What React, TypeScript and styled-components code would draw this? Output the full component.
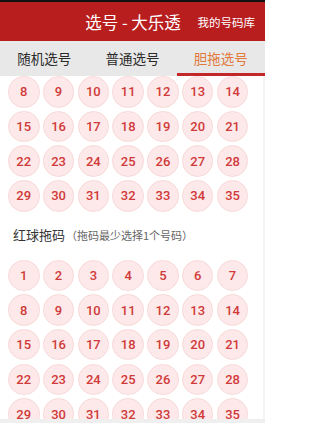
import React from "react";
import styled, { createGlobalStyle } from "styled-components";

const Global = createGlobalStyle`
  html, body { margin: 0; padding: 0; background: #fff; }
  body { width: 265px; height: 423px; overflow: hidden; font-family: Roboto, "Noto Sans CJK SC", sans-serif; }
  * { box-sizing: border-box; }
`;

const Screen = styled.div`
  width: 265px;
  height: 423px;
  display: flex;
  flex-direction: column;
  overflow: hidden;
  background: #fff;
`;

const StatusBar = styled.div`
  height: 2px;
  background: #111;
  flex: none;
`;

const Header = styled.div`
  height: 39px;
  flex: none;
  background: #b91e1f;
  position: relative;
  display: flex;
  align-items: center;
  justify-content: center;
  color: #fff;
`;

const Title = styled.div`
  font-family: "Noto Sans CJK SC", sans-serif;
  font-size: 16.5px;
  line-height: 1;
  margin-top: 2px;
  margin-left: 1px;
`;

const HeaderAction = styled.div`
  position: absolute;
  right: 10px;
  top: 0;
  bottom: 0;
  display: flex;
  align-items: center;
  font-family: "Noto Sans CJK SC", sans-serif;
  font-size: 11.5px;
  padding-top: 1px;
`;

const Tabs = styled.div`
  height: 35px;
  flex: none;
  background: #e8e8e8;
  display: grid;
  grid-template-columns: repeat(3, 1fr);
`;

const Tab = styled.div<{ $active?: boolean }>`
  display: flex;
  align-items: center;
  justify-content: center;
  font-family: "Noto Sans CJK SC", sans-serif;
  font-size: 13.5px;
  color: ${(p) => (p.$active ? "#e2783a" : "#2a2a2a")};
  border-bottom: 3px solid ${(p) => (p.$active ? "#c0282a" : "transparent")};
  padding-top: 2px;
`;

const Content = styled.div`
  flex: 1;
  overflow: hidden;
  border-right: 2px solid #f4f4f4;
  display: flex;
  flex-direction: column;
`;

const Grid = styled.div<{ $top: number }>`
  display: grid;
  grid-template-columns: repeat(7, 31.5px);
  column-gap: 3.3px;
  row-gap: 3.2px;
  padding-left: 8px;
  margin-top: ${(p) => p.$top}px;
`;

const Ball = styled.div`
  width: 31.5px;
  height: 31.5px;
  border-radius: 50%;
  background: #fde9e9;
  border: 1px solid #f8d9d9;
  display: flex;
  align-items: center;
  justify-content: center;
  font-family: Roboto, sans-serif;
  font-size: 13px;
  font-weight: 500;
  color: #d03a3a;
`;

const SectionLabel = styled.div`
  display: flex;
  align-items: center;
  padding-left: 13px;
  margin-top: 14px;
  height: 18px;
  font-family: "Noto Sans CJK SC", sans-serif;
`;

const LabelMain = styled.span`
  font-size: 13px;
  color: #333;
`;

const LabelHint = styled.span`
  font-size: 11px;
  color: #666;
  margin-left: 1px;
`;

const BottomStrip = styled.div`
  height: 4px;
  flex: none;
  background: #efefef;
`;

const range = (a: number, b: number) => Array.from({ length: b - a + 1 }, (_, i) => a + i);

export default function App() {
  return (
    <Screen>
      <Global />
      <StatusBar />
      <Header>
        <Title>选号 - 大乐透</Title>
        <HeaderAction>我的号码库</HeaderAction>
      </Header>
      <Tabs>
        <Tab>随机选号</Tab>
        <Tab>普通选号</Tab>
        <Tab $active>胆拖选号</Tab>
      </Tabs>
      <Content>
        <Grid $top={0}>
          {range(8, 35).map((n) => (
            <Ball key={n}>{n}</Ball>
          ))}
        </Grid>
        <SectionLabel>
          <LabelMain>红球拖码</LabelMain>
          <LabelHint>（拖码最少选择1个号码）</LabelHint>
        </SectionLabel>
        <Grid $top={16}>
          {range(1, 35).map((n) => (
            <Ball key={n}>{n}</Ball>
          ))}
        </Grid>
      </Content>
      <BottomStrip />
    </Screen>
  );
}
